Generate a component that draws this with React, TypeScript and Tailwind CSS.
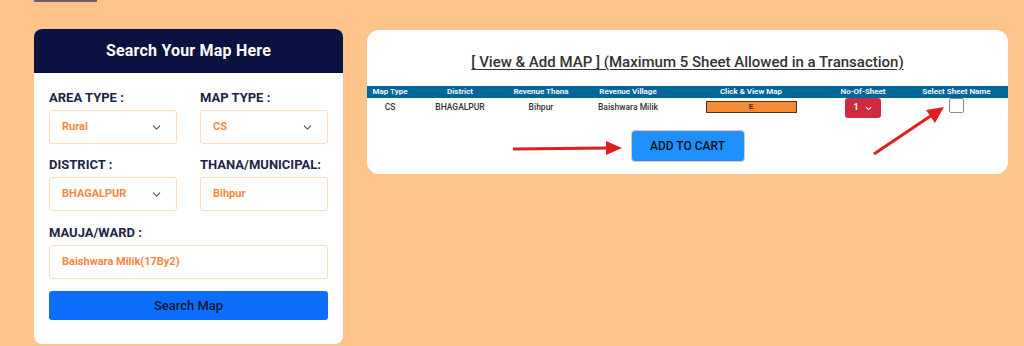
import { ChevronDown } from "lucide-react"

const font = { fontFamily: "Roboto, 'Liberation Sans', sans-serif" }

function Field({ label, value, select }: { label: string; value: string; select?: boolean }) {
  return (
    <div>
      <div className="text-[13px] leading-[16px] font-bold text-[#1d2547] mb-[4px]">{label}</div>
      <div className="h-[34px] border border-[#ffdcbd] rounded-[3px] flex items-center justify-between pl-[12px] pr-[13px]">
        <span className="text-[11px] font-bold text-[#f5873f]">{value}</span>
        {select && <ChevronDown className="w-[13px] h-[13px] text-[#555]" strokeWidth={2} />}
      </div>
    </div>
  )
}

const cols = "grid grid-cols-[46px_94px_68px_106px_140px_84px_1fr]"

export default function App() {
  return (
    <div className="relative w-[1024px] h-[346px] bg-[#ffc48b] overflow-hidden" style={font}>
      <div className="ml-[34px] w-[63px] h-[2px] bg-[#6d5e72]" />

      <div className="flex items-start gap-[24px] pl-[34px] mt-[27px]">
        {/* search card */}
        <div className="w-[309px] h-[315px] bg-white rounded-[8px] overflow-hidden">
          <div className="h-[44px] bg-[#0b1140] flex items-center justify-center">
            <span className="text-white text-[16px] font-bold tracking-[0.2px]">Search Your Map Here</span>
          </div>
          <div className="px-[15px] pt-[17px]">
            <div className="grid grid-cols-2 gap-x-[23px] gap-y-[13px]">
              <Field label="AREA TYPE :" value="Rural" select />
              <Field label="MAP TYPE :" value="CS" select />
              <Field label="DISTRICT :" value="BHAGALPUR" select />
              <Field label="THANA/MUNICIPAL:" value="Bihpur" />
            </div>
            <div className="mt-[14px]">
              <Field label="MAUJA/WARD :" value="Baishwara Milik(17By2)" />
            </div>
            <button className="mt-[12px] w-full h-[29px] bg-[#0d6efd] rounded-[3px] text-[13px] font-medium text-[#101530]">
              Search Map
            </button>
          </div>
        </div>

        {/* results card */}
        <div className="mt-[1px] w-[641px] h-[144px] bg-white rounded-[12px] overflow-hidden">
          <div className="pt-[20px] h-[56px] text-center">
            <span className="text-[15px] leading-[20px] font-medium text-[#333] underline underline-offset-[2px]">
              [ View &amp; Add MAP ] (Maximum 5 Sheet Allowed in a Transaction)
            </span>
          </div>
          <div className={`${cols} h-[12px] bg-[#00679a] text-white text-[8px] font-semibold items-center text-center leading-[12px]`}>
            <div>Map Type</div>
            <div>District</div>
            <div>Revenue Thana</div>
            <div>Revenue Village</div>
            <div>Click &amp; View Map</div>
            <div>No-Of-Sheet</div>
            <div>Select Sheet Name</div>
          </div>
          <div className={`${cols} h-[22px] text-[8.5px] font-medium text-[#333] items-start text-center`}>
            <div className="pt-[3px]">CS</div>
            <div className="pt-[3px]">BHAGALPUR</div>
            <div className="pt-[3px]">Bihpur</div>
            <div className="pt-[3px]">Baishwara Milik</div>
            <div className="pt-[3px] flex justify-center">
              <div className="w-[91px] h-[12px] bg-[#f68b35] border border-[#4a3320] flex items-center justify-center text-[8px] font-bold text-[#4a2a10]">
                E
              </div>
            </div>
            <div className="flex justify-center">
              <div className="w-[36px] h-[20px] bg-[#cf2a40] rounded-[3px] flex items-center justify-center gap-[5px] text-white text-[9px] font-bold">
                <span>1</span>
                <ChevronDown className="w-[9px] h-[9px]" strokeWidth={3} />
              </div>
            </div>
            <div className="flex justify-center">
              <div className="w-[15px] h-[15px] border border-[#8a8a8a] rounded-[2px] bg-white" />
            </div>
          </div>
          <div className="flex justify-center mt-[10px]">
            <button className="w-[114px] h-[32px] bg-[#1e90ff] border border-[#e6c9b0] rounded-[4px] text-[12px] font-medium text-[#111]">
              ADD TO CART
            </button>
          </div>
        </div>
      </div>

      {/* annotation arrows */}
      <svg className="absolute inset-0 pointer-events-none" width="1024" height="346">
        <line x1="513" y1="149" x2="608" y2="148" stroke="#e21f1f" strokeWidth="3" />
        <polygon points="606,141 622,148 606,155" fill="#e21f1f" />
        <line x1="874" y1="154" x2="932" y2="115" stroke="#e21f1f" strokeWidth="3" />
        <polygon points="944,107 935,123 926,110" fill="#e21f1f" />
      </svg>
    </div>
  )
}
